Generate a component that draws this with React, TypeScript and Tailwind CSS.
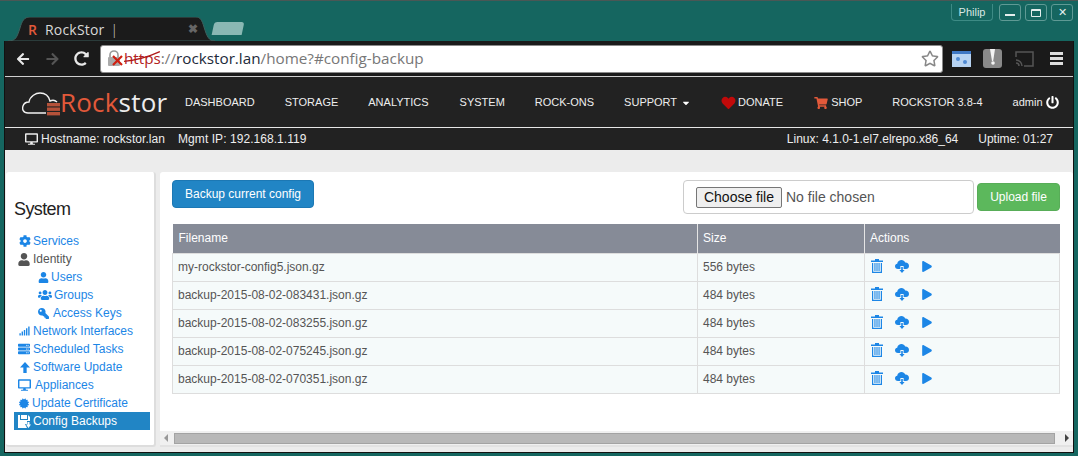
import {
  FaArrowLeft,
  FaArrowRight,
  FaCaretDown,
  FaCertificate,
  FaCog,
  FaDesktop,
  FaHeart,
  FaKey,
  FaPlay,
  FaPowerOff,
  FaRedoAlt,
  FaRegStar,
  FaServer,
  FaShoppingCart,
  FaSignal,
  FaUser,
  FaUsers,
} from "react-icons/fa"

const navLinks = ["DASHBOARD", "STORAGE", "ANALYTICS", "SYSTEM", "ROCK-ONS"]

const backups = [
  { name: "my-rockstor-config5.json.gz", size: "556 bytes" },
  { name: "backup-2015-08-02-083431.json.gz", size: "484 bytes" },
  { name: "backup-2015-08-02-083255.json.gz", size: "484 bytes" },
  { name: "backup-2015-08-02-075245.json.gz", size: "484 bytes" },
  { name: "backup-2015-08-02-070351.json.gz", size: "484 bytes" },
]

function ThickArrowUp({ className }: { className?: string }) {
  return (
    <svg className={className} viewBox="0 0 12 13" fill="currentColor">
      <path d="M6 0 L12 6.5 H8 V13 H4 V6.5 H0 Z" />
    </svg>
  )
}

function FloppyDown({ className }: { className?: string }) {
  return (
    <svg className={className} viewBox="0 0 13 13" fill="currentColor">
      <path d="M0 0 H9 V4 H3 V0 H2 V5 H10 V0 L12 2 V6 H9 V9 H7 L9 13 H0 Z" />
      <path d="M9.5 7 H11.5 V9.5 H13 L10.5 13 L8 9.5 H9.5 Z" />
    </svg>
  )
}

function TrashIcon({ className }: { className?: string }) {
  return (
    <svg className={className} viewBox="0 0 12 14" fill="currentColor">
      <path d="M4 0 H8 V1.5 H12 V3 H0 V1.5 H4 Z" />
      <path d="M1 4 H2.2 V12.8 H9.8 V4 H11 V14 H1 Z" />
      <rect x="3.4" y="4" width="1.1" height="8" />
      <rect x="5.45" y="4" width="1.1" height="8" />
      <rect x="7.5" y="4" width="1.1" height="8" />
    </svg>
  )
}

function CloudDown({ className }: { className?: string }) {
  return (
    <svg className={className} viewBox="0 0 14 14" fill="currentColor">
      <path d="M3 10 C1 10 0 8.6 0 7.2 C0 5.8 1 4.8 2.2 4.7 C2.6 2.2 4.6 1 6.4 1 C8.2 1 9.6 2 10.2 3.6 C12.4 3.4 14 5 14 6.9 C14 8.7 12.6 10 11 10 H8.6 V7 H5.4 V10 Z" />
      <path d="M6.2 8 H7.8 V11 H9.6 L7 14 L4.4 11 H6.2 Z" />
    </svg>
  )
}

const sideItems = [
  { label: "Services", Icon: FaCog, row: "pl-[5px] text-[#1c86e6]", icon: "w-[12px] h-[12px]", gap: "ml-[2px]" },
  { label: "Identity", Icon: FaUser, row: "pl-[4px] text-[#555]", icon: "w-[12px] h-[13px]", gap: "ml-[3px]" },
  { label: "Users", Icon: FaUser, row: "pl-[24px] text-[#1c86e6]", icon: "w-[11px] h-[11px]", gap: "ml-[2px]" },
  { label: "Groups", Icon: FaUsers, row: "pl-[24px] text-[#1c86e6]", icon: "w-[14px] h-[12px]", gap: "ml-[2px]" },
  { label: "Access Keys", Icon: FaKey, row: "pl-[24px] text-[#1c86e6]", icon: "w-[11px] h-[11px] -scale-x-100", gap: "ml-[4px]" },
  { label: "Network Interfaces", Icon: FaSignal, row: "pl-[5px] text-[#1c86e6]", icon: "w-[11px] h-[12px]", gap: "ml-[3px]" },
  { label: "Scheduled Tasks", Icon: FaServer, row: "pl-[4px] text-[#1c86e6]", icon: "w-[12px] h-[12px]", gap: "ml-[3px]" },
  { label: "Software Update", Icon: ThickArrowUp, row: "pl-[6px] text-[#1c86e6]", icon: "w-[10px] h-[11px]", gap: "ml-[3px]" },
  { label: "Appliances", Icon: FaDesktop, row: "pl-[4px] text-[#1c86e6]", icon: "w-[13px] h-[12px]", gap: "ml-[4px]" },
  { label: "Update Certificate", Icon: FaCertificate, row: "pl-[5px] text-[#1c86e6]", icon: "w-[10px] h-[11px]", gap: "ml-[3px]" },
]

function WindowButton({ children }: { children: React.ReactNode }) {
  return (
    <div className="w-[22px] h-[17px] rounded-[3px] border border-[#5f9a95] flex items-center justify-center">
      {children}
    </div>
  )
}

function BrowserTab() {
  return (
    <div className="relative ml-[4px] w-[207px] h-[24px] flex items-center text-[#d8d8d8] font-['Open_Sans',sans-serif]">
      <svg className="absolute inset-0 w-full h-full" viewBox="0 0 207 24" fill="none">
        <path d="M0 24 C8 24 9 20 12 11 C14 4 16 0 22 0 L188 0 C192 0 194 3 196 10 C199 20 201 24 207 24 Z" fill="#1b1b1b" stroke="#3d5f5c" />
      </svg>
      <span className="relative ml-[20px] w-[17px] text-[14px] font-semibold text-[#e2593a]">R</span>
      <span className="relative text-[14px] tracking-[0.2px]">RockStor</span>
      <span className="relative ml-[6px] text-[14px] font-light">|</span>
      <span className="relative ml-auto mr-[17px] text-[12px] font-bold text-[#666]">✖</span>
    </div>
  )
}

function Toolbar() {
  return (
    <div className="h-[35px] bg-[#1a1a1a] flex items-center">
      <FaArrowLeft className="ml-[10px] w-[16px] h-[14px] text-[#e8e8e8]" />
      <FaArrowRight className="ml-[13px] w-[17px] h-[14px] text-[#555]" />
      <FaRedoAlt className="ml-[13px] w-[15px] h-[15px] text-[#e8e8e8]" />
      <div className="ml-[11px] w-[843px] h-[28px] bg-white rounded-[3px] border border-[#8a8a8a] flex items-center pl-[6px] text-[15.25px] font-['Open_Sans',sans-serif]">
        <svg className="w-[17px] h-[17px] shrink-0" viewBox="0 0 17 17">
          <path d="M3 7 V5 a4 4 0 0 1 8 0 V7" fill="none" stroke="#999" strokeWidth="1.6" />
          <rect x="1" y="7" width="12" height="9" rx="1" fill="#aaa" />
          <path d="M6 6 L15 15 M15 6 L6 15" stroke="#cf1f10" strokeWidth="2.2" />
        </svg>
        <span className="relative text-[#b22222]">
          https
          <svg className="absolute left-0 top-0 w-full h-full" viewBox="0 0 38 22" fill="none">
            <path d="M0 14 C12 13 26 9 37 4" stroke="#b01818" strokeWidth="1.3" />
          </svg>
        </span>
        <span className="text-[#777]">://</span>
        <span className="text-[#1d2a3a]">rockstor.lan</span>
        <span className="text-[#777]">/home?#config-backup</span>
        <FaRegStar className="ml-auto mr-[3px] w-[18px] h-[17px] text-[#888]" />
      </div>
      <svg className="ml-[9px] w-[19px] h-[16px]" viewBox="0 0 19 16">
        <rect width="19" height="16" fill="#b7d3f2" />
        <rect width="19" height="3" fill="#3f78c4" />
        <circle cx="6" cy="8" r="2" fill="#4f8ad4" />
        <circle cx="13" cy="11" r="2" fill="#4f8ad4" />
      </svg>
      <svg className="ml-[12px] w-[19px] h-[19px]" viewBox="0 0 19 19">
        <rect width="19" height="19" rx="3" fill="#8a8a8a" />
        <path d="M7 0 L12 0 L10.2 12 L9 12 Z" fill="#f4f4f4" />
        <circle cx="10" cy="14" r="1.8" fill="#f4f4f4" />
      </svg>
      <svg className="ml-[13px] w-[19px] h-[16px]" viewBox="0 0 19 16" fill="none" stroke="#555" strokeWidth="1.5">
        <path d="M1 6 V1 H18 V15 H9" />
        <path d="M1 9 a6 6 0 0 1 6 6 M1 12 a3 3 0 0 1 3 3" />
      </svg>
      <div className="ml-[16px] flex flex-col gap-[2px]">
        <div className="w-[13px] h-[3px] bg-[#ddd]" />
        <div className="w-[13px] h-[3px] bg-[#ddd]" />
        <div className="w-[13px] h-[3px] bg-[#ddd]" />
      </div>
    </div>
  )
}

function Logo() {
  return (
    <div className="flex items-center ml-[17px] w-[163px]">
      <svg className="w-[39px] h-[24px] shrink-0 mt-[3px]" viewBox="0 0 39 24" fill="none">
        <path d="M24 21 H6 C1 21 0 17 1 14 C2 11 5 10 7 10 C8 4 14 1 18 1 C24 1 27 5 28 9 C30 8 33 8 35 10" stroke="#f2f2f2" strokeWidth="1.4" />
        <rect x="25" y="11" width="13" height="3.4" fill="#b5523a" />
        <rect x="25" y="15.5" width="13" height="3.4" fill="#b5523a" />
        <rect x="25" y="20" width="13" height="3.4" fill="#b5523a" />
      </svg>
      <span className="-ml-[1px] font-['Open_Sans',sans-serif] text-[26px] leading-none tracking-[0.2px]">
        <span className="text-[#e2593a]">Rock</span>
        <span className="text-[#ececec]">stor</span>
      </span>
    </div>
  )
}

function NavBar() {
  return (
    <div className="h-[50px] bg-[#222] flex items-center text-[11px] text-[#eee]">
      <Logo />
      <div className="flex items-center gap-[30px] mt-[1px]">
        {navLinks.map((link) => (
          <span key={link} className="[&:nth-child(4)]:ml-[1px]">
            {link}
          </span>
        ))}
        <span className="flex items-center">
          SUPPORT
          <FaCaretDown className="ml-[5px] w-[8px] h-[10px] text-white" />
        </span>
        <span className="flex items-center ml-[1px]">
          <FaHeart className="w-[15px] h-[14px] mr-[2px] text-[#c00a0a]" />
          DONATE
        </span>
        <span className="flex items-center ml-[1px]">
          <FaShoppingCart className="w-[14px] h-[12px] mr-[3px] text-[#e2593a]" />
          SHOP
        </span>
        <span>ROCKSTOR 3.8-4</span>
        <span className="flex items-center">
          admin
          <FaPowerOff className="ml-[3px] w-[13px] h-[13px] text-white" />
        </span>
      </div>
    </div>
  )
}

function InfoBar() {
  return (
    <div className="h-[23px] bg-[#222] border-t border-[#e6e6e6] flex items-center text-[12px] text-[#eee] pl-[20px]">
      <FaDesktop className="w-[13px] h-[12px] mr-[3px]" />
      <span className="tracking-[0.06px]">Hostname: rockstor.lan</span>
      <span className="ml-[13px] tracking-[0.06px]">Mgmt IP: 192.168.1.119</span>
      <span className="ml-auto">Linux: 4.1.0-1.el7.elrepo.x86_64</span>
      <span className="ml-[20px] mr-[20px]">Uptime: 01:27</span>
    </div>
  )
}

function Sidebar() {
  return (
    <aside className="w-[150px] ml-[1px] bg-white rounded-[3px] border-r-2 border-b-2 border-[#ddd] pl-[8px] pt-[26px]">
      <h3 className="h-[22px] text-[18px] leading-[22px] tracking-[-0.6px] text-[#222]">System</h3>
      <ul className="mt-[12px] w-[136px] text-[12px]">
        {sideItems.map(({ label, Icon, row, icon, gap }) => (
          <li key={label} className={`h-[18px] flex items-center ${row}`}>
            <Icon className={`shrink-0 ${icon}`} />
            <span className={gap}>{label}</span>
          </li>
        ))}
        <li className="h-[18px] flex items-center pl-[4px] bg-[#2185c5] text-white">
          <FloppyDown className="w-[13px] h-[13px] shrink-0" />
          <span className="ml-[2px]">Config Backups</span>
        </li>
      </ul>
    </aside>
  )
}

function BackupTable() {
  return (
    <table className="mt-[10px] w-[888px] table-fixed border-collapse text-[12px] text-[#555]">
      <thead>
        <tr className="h-[29px] bg-[#868b97] text-white text-left">
          <th className="w-[525px] pl-[6px] font-normal border-r border-[#e5e5e5]">Filename</th>
          <th className="w-[167px] pl-[5px] font-normal border-r border-[#e5e5e5]">Size</th>
          <th className="pl-[5px] font-normal">Actions</th>
        </tr>
      </thead>
      <tbody>
        {backups.map((backup) => (
          <tr key={backup.name} className="h-[28px] bg-[#f5fafa]">
            <td className="pl-[5px] border border-[#ddd]">{backup.name}</td>
            <td className="pl-[5px] border border-[#ddd]">{backup.size}</td>
            <td className="pl-[6px] border border-[#ddd]">
              <div className="flex items-center text-[#1c86e6] -mt-[2px]">
                <TrashIcon className="w-[12px] h-[14px]" />
                <CloudDown className="ml-[12px] w-[14px] h-[14px]" />
                <FaPlay className="ml-[13px] w-[10px] h-[11px]" />
              </div>
            </td>
          </tr>
        ))}
      </tbody>
    </table>
  )
}

function ScrollBar() {
  return (
    <div className="mt-auto h-[16px] bg-[#f0f0f0] border-b-2 border-[#e2e2e2] flex items-center text-[#777] shrink-0">
      <span className="ml-[4px] w-0 h-0 border-y-[4px] border-y-transparent border-r-[4px] border-r-[#999]" />
      <div className="ml-[6px] w-[881px] h-[11px] bg-[#b8b8b8] border border-[#a3a3a3]" />
      <span className="ml-[10px] w-0 h-0 border-y-[4px] border-y-transparent border-l-[4px] border-l-[#444]" />
    </div>
  )
}

export default function App() {
  return (
    <div className="w-[1078px] h-[456px] bg-[#156660] border-t border-[#4a5755] flex flex-col overflow-hidden font-['Liberation_Sans',Arial,sans-serif]">
      <div className="h-[40px] flex pl-[4px] pr-[5px]">
        <div className="mt-[16px] flex items-start">
          <BrowserTab />
          <div className="mt-[5px] -ml-[2px] w-[30px] h-[13px] bg-[#8ab8b4] rounded-t-[3px] -skew-x-12" />
        </div>
        <div className="ml-auto flex items-start gap-[4px] mt-[3px]">
          <div className="mr-[2px] w-[42px] h-[17px] border border-[#3d8b85] border-t-0 rounded-b-[4px] flex items-center justify-center text-[11px] text-[#d8e6e4]">
            Philip
          </div>
          <WindowButton>
            <div className="w-[10px] h-[2px] mt-[4px] bg-[#e4eeed]" />
          </WindowButton>
          <WindowButton>
            <div className="w-[10px] h-[8px] border border-t-2 border-[#e4eeed] rounded-[1px]" />
          </WindowButton>
          <WindowButton>
            <span className="text-[11px] leading-none text-[#e4eeed]">✕</span>
          </WindowButton>
        </div>
      </div>

      <div className="ml-[4px] mr-[4px] mb-[3px] flex-1 min-h-0 flex flex-col border border-t-0 border-[#111] bg-[#ececec]">
        <Toolbar />
        <div className="h-[1px] bg-[#cfcfcf]" />
        <NavBar />
        <InfoBar />
        <div className="flex-1 min-h-0 flex gap-[4px] pt-[22px] pb-[5px]">
          <Sidebar />
          <main className="flex-1 bg-white rounded-[3px] flex flex-col min-w-0">
            <div className="px-[12px] pt-[8px]">
              <div className="flex items-start">
                <button className="h-[28px] w-[142px] rounded-[4px] bg-[#2185c5] border border-[#1c78b4] text-[12px] text-white">
                  Backup current config
                </button>
                <div className="ml-auto w-[291px] h-[34px] border border-[#ccc] rounded-[4px] flex items-center pl-[12px] pt-[1px] text-[14px] text-[#555]">
                  <span className="w-[86px] h-[21px] bg-[#efefef] border border-[#767676] rounded-[2px] flex items-center justify-center text-[#111]">
                    Choose file
                  </span>
                  <span className="ml-[4px]">No file chosen</span>
                </div>
                <button className="ml-[3px] mr-[1px] mt-[3px] w-[83px] h-[28px] rounded-[4px] bg-[#5cb85c] border border-[#58ad58] text-[12px] text-white">
                  Upload file
                </button>
              </div>
              <BackupTable />
            </div>
            <ScrollBar />
          </main>
        </div>
      </div>
    </div>
  )
}
